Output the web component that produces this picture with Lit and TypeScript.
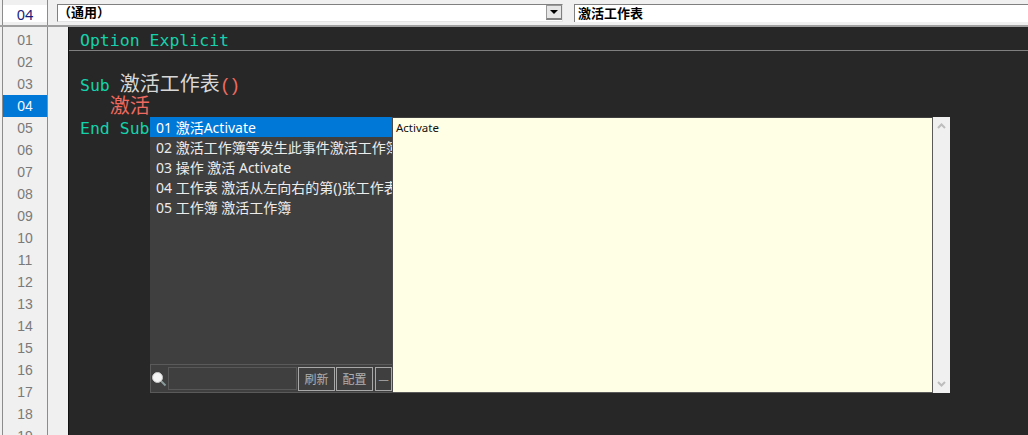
import { LitElement, html, css } from "lit";
import { customElement } from "lit/decorators.js";

const rows = Array.from({ length: 19 }, (_, i) => String(i + 1).padStart(2, "0"));
const items = [
  "01 激活Activate",
  "02 激活工作簿等发生此事件激活工作簿",
  "03 操作 激活 Activate",
  "04 工作表 激活从左向右的第()张工作表",
  "05 工作簿 激活工作簿",
];

@customElement("app-root")
export class AppRoot extends LitElement {
  static styles = css`
    :host { display: block; width: 1028px; height: 435px; overflow: hidden; position: relative; background: #272727; font-family: "Noto Sans", "Noto Sans CJK SC", sans-serif; }
    .top { display: flex; height: 25px; background: #f0f0f0; border-bottom: 2px solid #a0a0a0; box-sizing: content-box; }
    .edge { width: 2px; background: #f0f0f0; border-right: 1px solid #8c8c8c; flex: none; }
    .topnum { width: 44px; flex: none; margin: 5px 0 3px; background: #fff; color: #1a1a7a; font: 14.5px/19px "Noto Sans", sans-serif; text-align: center; }
    .topgap { width: 9px; flex: none; border-left: 1px solid #8c8c8c; }
    .combo { width: 506px; flex: none; height: 18px; margin-top: 4px; background: #fff; border: 1px solid #808080; border-right-color: #e4e4e4; border-bottom-color: #e4e4e4; box-sizing: border-box; display: flex; justify-content: space-between; font: 700 13px/14px "Noto Sans CJK SC", sans-serif; color: #000; }
    .arrowbtn { width: 16px; height: 15px; background: #e6e6e6; border: 1px solid #808080; border-top-color: #9a9a9a; border-left-color: #9a9a9a; border-bottom-width: 2px; box-sizing: border-box; display: flex; align-items: center; justify-content: center; }
    .arrowbtn i { width: 0; height: 0; border: 4px solid transparent; border-top: 4px solid #000; border-bottom: 0; }
    .field { flex: 1; height: 18px; margin: 4px 0 0 11px; background: #fff; border-left: 1px solid #808080; border-top: 1px solid #808080; box-sizing: border-box; font: 700 13px/15px "Noto Sans CJK SC", sans-serif; color: #000; padding-left: 3px; }

    .main { display: flex; height: 408px; }
    .gutter { width: 44px; flex: none; background: #f0f0f0; padding-top: 2px; border-right: 1px solid #8c8c8c; overflow: hidden; }
    .num { height: 22px; font: 14px/22px "Liberation Sans", sans-serif; color: #7a7a7a; text-align: center; }
    .num.sel { background: #0078d7; color: #f0f8ff; }
    .margin { width: 20px; flex: none; background: #f0f0f0; border-right: 1px solid #111; }
    .code { flex: 1; padding-top: 2px; font: 16.5px/24px "DejaVu Sans Mono", "Noto Sans CJK SC", monospace; color: #14d2ac; }
    .line { height: 22px; padding-left: 11px; white-space: pre; }
    .line.rule { height: 21px; border-bottom: 1px solid #808080; }
    .cjk { font: 20px/20px "Noto Sans CJK SC", sans-serif; color: #d8d8d8; }
    .red { color: #ee6a60; }
    .paren { font: 19px/20px "Liberation Sans", sans-serif; padding-left: 2px; letter-spacing: 4px; }

    .popup { position: absolute; left: 150px; top: 117px; width: 800px; height: 276px; display: flex; }
    .list { width: 243px; flex: none; background: #3f3f3f; display: flex; flex-direction: column; box-sizing: border-box; border-right: 1px solid #4a4a4a; }
    .items { flex: 1; overflow: hidden; }
    .item { height: 20px; font: 14px/22px "Noto Sans", "Noto Sans CJK SC", sans-serif; color: #ececec; padding-left: 6px; white-space: nowrap; overflow: hidden; }
    .item.sel { background: #0078d7; color: #fff; }
    .foot { height: 29px; box-sizing: border-box; border: 1px solid #5a5a5a; border-right: 0; display: flex; align-items: center; gap: 1px; }
    .foot svg { flex: none; }
    .search { width: 129px; height: 23px; box-sizing: border-box; border: 1px solid #585858; flex: none; }
    .btn { width: 37px; height: 24px; box-sizing: border-box; border: 1px solid #a8a8a8; color: #b0b0b0; font: 12px/22px "Noto Sans CJK SC", sans-serif; text-align: center; flex: none; overflow: hidden; }
    .btn.min { width: 17px; margin-left: 1px; }
    .doc { flex: 1; background: #ffffe6; border-top: 1px solid #3f3f3f; border-bottom: 1px solid #5a5a5a; border-right: 1px solid #5a5a5a; font: 11.5px/20px "Noto Sans", sans-serif; color: #111; padding-left: 3px; }
    .sb { width: 17px; flex: none; background: #f0f0f0; display: flex; flex-direction: column; justify-content: space-between; align-items: center; padding: 6px 0; box-sizing: border-box; }
  `;

  render() {
    return html`
      <div class="top">
        <div class="edge"></div>
        <div class="topnum">04</div>
        <div class="topgap"></div>
        <div class="combo"><span>（通用）</span><div class="arrowbtn"><i></i></div></div>
        <div class="field">激活工作表</div>
      </div>
      <div class="main">
        <div class="edge"></div>
        <div class="gutter">
          ${rows.map((r) => html`<div class="num ${r === "04" ? "sel" : ""}">${r}</div>`)}
        </div>
        <div class="margin"></div>
        <div class="code">
          <div class="line rule">Option Explicit</div>
          <div class="line"></div>
          <div class="line">Sub <span class="cjk">激活工作表</span><span class="paren red">()</span></div>
          <div class="line">   <span class="cjk red">激活</span></div>
          <div class="line">End Sub</div>
        </div>
      </div>
      <div class="popup">
        <div class="list">
          <div class="items">
            ${items.map((t, i) => html`<div class="item ${i === 0 ? "sel" : ""}">${t}</div>`)}
          </div>
          <div class="foot">
            <svg width="16" height="16" viewBox="0 0 16 16">
              <line x1="10" y1="10" x2="14.5" y2="14.5" stroke="#8a9a9a" stroke-width="2"></line>
              <circle cx="6.5" cy="6.5" r="5" fill="#f4f4f4" stroke="#c8c8c8"></circle>
            </svg>
            <div class="search"></div>
            <div class="btn">刷新</div>
            <div class="btn">配置</div>
            <div class="btn min">—</div>
          </div>
        </div>
        <div class="doc">Activate</div>
        <div class="sb">
          <svg width="9" height="6" viewBox="0 0 9 6"><path d="M1 5 L4.5 1.5 L8 5" fill="none" stroke="#bdbdbd" stroke-width="2"></path></svg>
          <svg width="9" height="6" viewBox="0 0 9 6"><path d="M1 1 L4.5 4.5 L8 1" fill="none" stroke="#bdbdbd" stroke-width="2"></path></svg>
        </div>
      </div>
    `;
  }
}
